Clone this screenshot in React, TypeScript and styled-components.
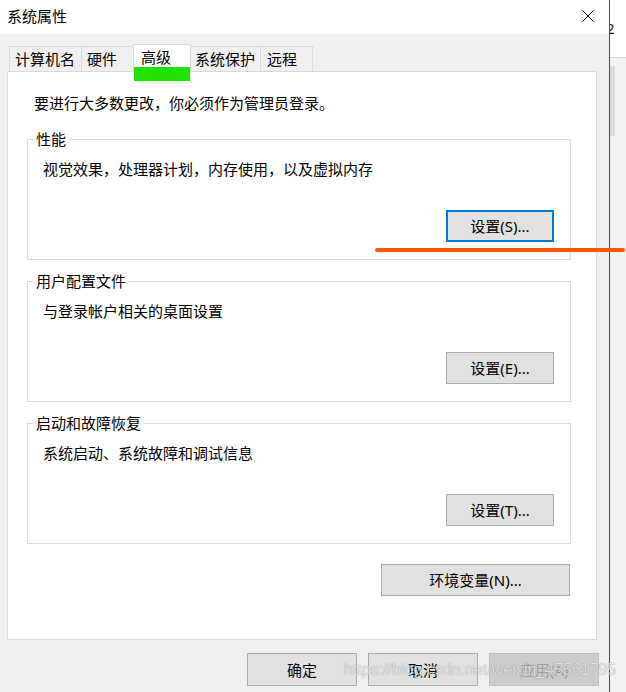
import React from "react";
import styled, { createGlobalStyle } from "styled-components";

const GlobalStyle = createGlobalStyle`
  html, body { margin: 0; padding: 0; background: #ffffff; }
  body {
    font-family: "Noto Sans", "Noto Sans CJK SC", sans-serif;
    font-size: 15px;
    color: #000;
  }
  * { box-sizing: border-box; }
`;

const FONT = `"Noto Sans", "Noto Sans CJK SC", sans-serif`;

const Screen = styled.div`
  position: relative;
  width: 626px;
  height: 692px;
  display: flex;
  overflow: hidden;
`;

const Dialog = styled.div`
  width: 609px;
  flex: none;
  display: flex;
  flex-direction: column;
  background: #f0f0f0;
`;

const TitleBar = styled.div`
  height: 34px;
  background: #ffffff;
  display: flex;
  align-items: center;
  justify-content: space-between;
  padding: 0 15px 2px 7px;
`;

const Title = styled.span`
  font-family: ${FONT};
  font-size: 15px;
  line-height: 20px;
`;

const CloseBtn = styled.div`
  width: 12px;
  height: 12px;
  display: flex;
`;

const Body = styled.div`
  flex: 1;
  display: flex;
  flex-direction: column;
  padding: 10px 12px 0 7px;
`;

const TabRow = styled.div`
  height: 27px;
  display: flex;
  align-items: flex-end;
  padding-left: 2px;
  position: relative;
  z-index: 1;
`;

const Tab = styled.div<{ $w: number; $pl: number; $active?: boolean }>`
  width: ${(p) => p.$w}px;
  height: ${(p) => (p.$active ? 28 : 25)}px;
  margin-bottom: ${(p) => (p.$active ? -1 : 0)}px;
  margin-left: -1px;
  &:first-child { margin-left: 0; }
  padding-left: ${(p) => p.$pl}px;
  padding-bottom: ${(p) => (p.$active ? 3 : 0)}px;
  border: 1px solid #d9d9d9;
  border-bottom: none;
  background: ${(p) => (p.$active ? "#ffffff" : "#f0f0f0")};
  position: relative;
  z-index: ${(p) => (p.$active ? 2 : 1)};
  display: flex;
  align-items: center;
  font-family: ${FONT};
  font-size: 15px;
  line-height: 20px;
  white-space: nowrap;
`;

const Panel = styled.div`
  height: 569px;
  border: 1px solid #d9d9d9;
  background: #ffffff;
  padding: 21px 25px 0 19px;
  display: flex;
  flex-direction: column;
`;

const Notice = styled.div`
  padding-left: 7px;
  line-height: 20px;
  font-family: ${FONT};
  font-size: 15px;
  margin-bottom: 16px;
`;

const GroupList = styled.div`
  display: flex;
  flex-direction: column;
  gap: 11px;
`;

const Group = styled.fieldset`
  margin: 0;
  padding: 0;
  border: 1px solid #dcdcdc;
  min-inline-size: 0;
`;

const Legend = styled.legend`
  margin-left: 5px;
  padding: 0 3px;
  font-family: ${FONT};
  font-size: 15px;
  line-height: 20px;
`;

const GroupBody = styled.div`
  padding: 10px 16px 17px 15px;
  display: flex;
  flex-direction: column;
`;

const Desc = styled.div`
  font-family: ${FONT};
  font-size: 15px;
  line-height: 20px;
`;

const RightRow = styled.div<{ $mt: number; $mr?: number }>`
  display: flex;
  justify-content: flex-end;
  margin-top: ${(p) => p.$mt}px;
  margin-right: ${(p) => p.$mr ?? 0}px;
`;

const Button = styled.div<{ $w: number; $h: number; $focus?: boolean; $disabled?: boolean }>`
  width: ${(p) => p.$w}px;
  height: ${(p) => p.$h}px;
  display: flex;
  align-items: center;
  justify-content: center;
  background: ${(p) => (p.$disabled ? "#cccccc" : "#e1e1e1")};
  border: ${(p) =>
    p.$focus ? "2px solid #0078d7" : p.$disabled ? "1px solid #bfbfbf" : "1px solid #adadad"};
  color: ${(p) => (p.$disabled ? "#a0a0a0" : "#000")};
  font-family: ${FONT};
  font-size: 15px;
  line-height: 20px;
  white-space: nowrap;
`;

const Footer = styled.div`
  display: flex;
  justify-content: flex-end;
  gap: 11px;
  margin-top: 13px;
  margin-right: -2px;
`;

const Strip = styled.div`
  flex: 1;
  border-left: 1px solid #4a4a4a;
  display: flex;
  flex-direction: column;
  background: #f2f2f2;
  overflow: hidden;
`;

const StripTop = styled.div`
  height: 58px;
  background: #ffffff;
  border-bottom: 1px solid #d6d6d6;
  padding-top: 18px;
  font-family: ${FONT};
  font-size: 15px;
  line-height: 20px;
  text-indent: -4px;
  color: #1a1a1a;
`;

const StripThumb = styled.div`
  margin-top: 8px;
  width: 5px;
  height: 70px;
  background: #dadada;
`;

const GreenMark = styled.div`
  position: absolute;
  left: 134px;
  top: 67px;
  width: 56px;
  height: 14px;
  background: #22e000;
  z-index: 5;
`;

const OrangeMark = styled.div`
  position: absolute;
  left: 375px;
  top: 248px;
  width: 250px;
  height: 4px;
  border-radius: 2px;
  background: #ff5500;
  z-index: 5;
`;

const Watermark = styled.div`
  position: absolute;
  left: 344px;
  top: 660px;
  font-family: "Liberation Sans", Arial, sans-serif;
  font-size: 16px;
  line-height: 20px;
  color: rgba(255, 255, 255, 0.75);
  text-shadow: 0 0 1px rgba(0, 0, 0, 0.45);
  white-space: nowrap;
  z-index: 6;
`;

const tabs = [
  { label: "计算机名", w: 73, pl: 5 },
  { label: "硬件", w: 53, pl: 5 },
  { label: "高级", w: 58, pl: 7, active: true },
  { label: "系统保护", w: 71, pl: 4 },
  { label: "远程", w: 53, pl: 6 },
];

const groups = [
  { title: "性能", desc: "视觉效果，处理器计划，内存使用，以及虚拟内存", btn: "设置(S)...", focus: true },
  { title: "用户配置文件", desc: "与登录帐户相关的桌面设置", btn: "设置(E)..." },
  { title: "启动和故障恢复", desc: "系统启动、系统故障和调试信息", btn: "设置(T)..." },
];

export default function App() {
  return (
    <>
      <GlobalStyle />
      <Screen>
        <Dialog>
          <TitleBar>
            <Title>系统属性</Title>
            <CloseBtn>
              <svg width="12" height="12" viewBox="0 0 12 12">
                <path d="M0.5 0.5 L11.5 11.5 M11.5 0.5 L0.5 11.5" stroke="#000" strokeWidth="1" fill="none" />
              </svg>
            </CloseBtn>
          </TitleBar>
          <Body>
            <TabRow>
              {tabs.map((t) => (
                <Tab key={t.label} $w={t.w} $pl={t.pl} $active={t.active}>
                  {t.label}
                </Tab>
              ))}
            </TabRow>
            <Panel>
              <Notice>要进行大多数更改，你必须作为管理员登录。</Notice>
              <GroupList>
                {groups.map((g) => (
                  <Group key={g.title}>
                    <Legend>{g.title}</Legend>
                    <GroupBody>
                      <Desc>{g.desc}</Desc>
                      <RightRow $mt={31}>
                        <Button $w={108} $h={32} $focus={g.focus}>
                          {g.btn}
                        </Button>
                      </RightRow>
                    </GroupBody>
                  </Group>
                ))}
              </GroupList>
              <RightRow $mt={20} $mr={1}>
                <Button $w={189} $h={32}>环境变量(N)...</Button>
              </RightRow>
            </Panel>
            <Footer>
              <Button $w={110} $h={33}>确定</Button>
              <Button $w={110} $h={33}>取消</Button>
              <Button $w={110} $h={33} $disabled>应用(A)</Button>
            </Footer>
          </Body>
        </Dialog>
        <Strip>
          <StripTop>2</StripTop>
          <StripThumb />
        </Strip>
        <GreenMark />
        <OrangeMark />
        <Watermark>https://blog.csdn.net/weixin_45561795</Watermark>
      </Screen>
    </>
  );
}
